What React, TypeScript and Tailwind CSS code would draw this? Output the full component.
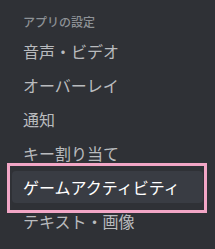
const items = [
  "音声・ビデオ",
  "オーバーレイ",
  "通知",
  "キー割り当て",
  "ゲームアクティビティ",
  "テキスト・画像",
];

const selected = "ゲームアクティビティ";

export default function App() {
  return (
    <div
      className="relative h-[249px] w-[215px] overflow-hidden bg-[#2f3136] pl-[12px] pr-[12px] pt-[14px]"
      style={{ fontFamily: '"Noto Sans CJK JP", "Noto Sans", sans-serif' }}
    >
      <div className="px-[11px] pb-[5px] text-[12px] leading-[16px] font-medium text-[#8e9297]">
        アプリの設定
      </div>
      <div className="flex flex-col gap-[2px]">
        {items.map((label) => {
          const active = label === selected;
          return (
            <div key={label} className="relative">
              <div
                className={
                  active
                    ? "flex h-[32px] items-center rounded-[4px] bg-[#393c43] px-[11px] text-[16px] leading-[20px] text-white"
                    : "flex h-[32px] items-center rounded-[4px] px-[11px] text-[16px] leading-[20px] text-[#b9bbbe]"
                }
              >
                {label}
              </div>
              {active && (
                <div className="pointer-events-none absolute -left-[5px] -right-[4px] -top-[8px] -bottom-[10px] border-[3px] border-[#f2a6c6]" />
              )}
            </div>
          );
        })}
      </div>
    </div>
  );
}
